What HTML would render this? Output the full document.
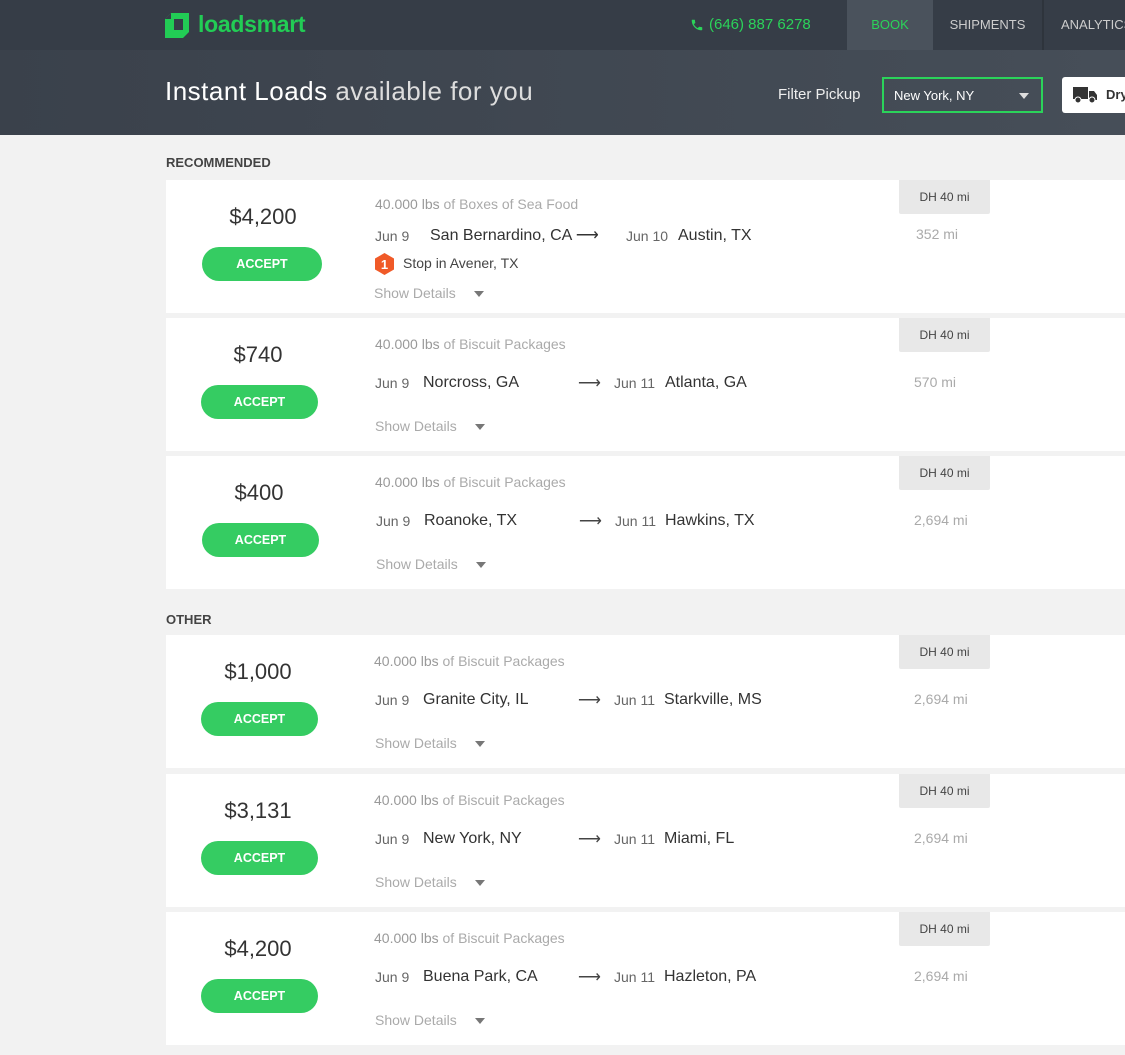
<!DOCTYPE html>
<html><head><meta charset="utf-8"><style>
*{margin:0;padding:0;box-sizing:border-box}
body{width:1125px;height:1055px;background:#f2f2f2;font-family:"Liberation Sans",sans-serif;position:relative;overflow:hidden;color:#333}
.a{position:absolute;white-space:nowrap}
.nav{left:0;top:0;width:1125px;height:50px;background:#363d47}
.hero{left:0;top:50px;width:1125px;height:85px;background:linear-gradient(90deg,#3a414b,#464e58)}
.card{position:absolute;left:166px;width:960px;height:133px;background:#fff}
.price{position:absolute;font-size:22px;color:#333;text-align:center;width:140px}
.btn{position:absolute;height:34px;border-radius:17px;background:#35cc62;color:#fff;font-size:12.5px;font-weight:bold;text-align:center;line-height:34px}
.g{color:#aaa;font-size:14px}
.g b{font-weight:normal;color:#999}
.d{font-size:14px;color:#666}
.c{font-size:16px;color:#333}
.dh{position:absolute;left:733px;top:0;width:91px;height:34px;background:#e8e8e8;font-size:12px;color:#444;text-align:center;line-height:34px;border-radius:0 0 2px 2px}
.car{display:inline-block;width:0;height:0;border-left:5px solid transparent;border-right:5px solid transparent;border-top:6px solid #777;margin-left:18px;vertical-align:middle}
.lbl{font-size:13px;font-weight:bold;color:#444}
</style></head><body>
<div class="a nav"></div>
<div class="a hero"></div>
<svg class="a" style="left:164px;top:12px" width="26" height="27" viewBox="0 0 26 27"><path d="M7 1H25V20L19 26H1V7L7 1Z" fill="#22cc55"/><path d="M10 7H19V18H10Z" fill="#363d47"/><path d="M7 1V7H1Z" fill="#363d47"/></svg>
<div class="a" style="left:198px;top:11px;font-size:23px;font-weight:bold;color:#22cc55;letter-spacing:-0.3px">loadsmart</div>
<svg class="a" style="left:690px;top:18px" width="14" height="14" viewBox="0 0 24 24"><path d="M6.6 10.8c1.4 2.8 3.8 5.1 6.6 6.6l2.2-2.2c.3-.3.7-.4 1-.2 1.1.4 2.3.6 3.6.6.6 0 1 .4 1 1V20c0 .6-.4 1-1 1C10.6 21 3 13.4 3 4c0-.6.4-1 1-1h3.5c.6 0 1 .4 1 1 0 1.3.2 2.5.6 3.6.1.3 0 .7-.2 1L6.6 10.8z" fill="#2bd35a"/></svg>
<div class="a" style="left:709px;top:16px;font-size:15px;color:#2bd35a">(646) 887 6278</div>
<div class="a" style="left:847px;top:0;width:86px;height:50px;background:#4a525c;color:#2bd35a;font-size:13px;text-align:center;line-height:50px">BOOK</div>
<div class="a" style="left:933px;top:0;width:109px;height:50px;color:#ccc;font-size:13px;text-align:center;line-height:50px">SHIPMENTS</div>
<div class="a" style="left:1042px;top:0;width:2px;height:50px;background:#2e343c"></div>
<div class="a" style="left:1061px;top:17px;color:#ccc;font-size:13px">ANALYTICS</div>
<div class="a" style="left:165px;top:76px;font-size:26px;color:#fff;letter-spacing:0.5px">Instant Loads <span style="color:#ddd">available for you</span></div>
<div class="a" style="left:778px;top:86px;font-size:15px;color:#eee">Filter Pickup</div>
<div class="a" style="left:882px;top:77px;width:161px;height:36px;border:2px solid #2bd35a;color:#fff;font-size:13px;padding:9px 0 0 10px">New York, NY<span style="position:absolute;right:12px;top:14px;border-left:5px solid transparent;border-right:5px solid transparent;border-top:6px solid #ddd"></span></div>
<div class="a" style="left:1062px;top:77px;width:80px;height:36px;background:#fff;border-radius:3px;font-size:13px;font-weight:bold;padding:10px 0 0 44px;color:#333">Dry</div>
<svg class="a" style="left:1073px;top:86px" width="25" height="18" viewBox="0 0 25 18"><rect x="0" y="1" width="15" height="12" fill="#333"/><path d="M16 5H21L24 9V14H16Z" fill="#333"/><circle cx="5" cy="14" r="3" fill="#333" stroke="#fff"/><circle cx="19" cy="14" r="3" fill="#333" stroke="#fff"/></svg>

<div class="a lbl" style="left:166px;top:155px">RECOMMENDED</div>

<div class="card" style="top:180px">
<div class="price" style="left:27px;top:24px">$4,200</div>
<div class="btn" style="left:36px;top:67px;width:120px">ACCEPT</div>
<div class="a g" style="left:209px;top:16px"><b>40.000 lbs</b> of Boxes of Sea Food</div>
<div class="a d" style="left:209px;top:48px">Jun 9</div>
<div class="a c" style="left:264px;top:45px">San Bernardino, CA &#10230;</div>
<div class="a d" style="left:460px;top:48px">Jun 10</div>
<div class="a c" style="left:512px;top:47px">Austin, TX</div>
<svg class="a" style="left:208px;top:73px" width="21" height="22" viewBox="0 0 21 22"><path d="M10.5 0L20 5.5V16.5L10.5 22L1 16.5V5.5Z" fill="#f05a28"/><text x="10.5" y="16" font-size="13" font-weight="bold" fill="#fff" text-anchor="middle" font-family="Liberation Sans">1</text></svg>
<div class="a" style="left:237px;top:75px;font-size:14px;color:#444">Stop in Avener, TX</div>
<div class="a g" style="left:208px;top:105px">Show Details<span class="car"></span></div>
<div class="dh">DH 40 mi</div>
<div class="a g" style="left:750px;top:46px">352 mi</div>
</div>

<div class="card" style="top:318px">
<div class="price" style="left:22px;top:24px">$740</div>
<div class="btn" style="left:35px;top:67px;width:117px">ACCEPT</div>
<div class="a g" style="left:209px;top:18px"><b>40.000 lbs</b> of Biscuit Packages</div>
<div class="a d" style="left:209px;top:57px">Jun 9</div>
<div class="a c" style="left:257px;top:56px">Norcross, GA</div>
<div class="a c" style="left:412px;top:55px;color:#444">&#10230;</div>
<div class="a d" style="left:448px;top:57px">Jun 11</div>
<div class="a c" style="left:499px;top:56px">Atlanta, GA</div>
<div class="a g" style="left:209px;top:100px">Show Details<span class="car"></span></div>
<div class="dh">DH 40 mi</div>
<div class="a g" style="left:748px;top:56px">570 mi</div>
</div>

<div class="card" style="top:456px">
<div class="price" style="left:23px;top:24px">$400</div>
<div class="btn" style="left:36px;top:67px;width:117px">ACCEPT</div>
<div class="a g" style="left:209px;top:18px"><b>40.000 lbs</b> of Biscuit Packages</div>
<div class="a d" style="left:210px;top:57px">Jun 9</div>
<div class="a c" style="left:258px;top:56px">Roanoke, TX</div>
<div class="a c" style="left:413px;top:55px;color:#444">&#10230;</div>
<div class="a d" style="left:449px;top:57px">Jun 11</div>
<div class="a c" style="left:499px;top:56px">Hawkins, TX</div>
<div class="a g" style="left:210px;top:100px">Show Details<span class="car"></span></div>
<div class="dh">DH 40 mi</div>
<div class="a g" style="left:748px;top:56px">2,694 mi</div>
</div>

<div class="a lbl" style="left:166px;top:612px">OTHER</div>

<div class="card" style="top:635px">
<div class="price" style="left:22px;top:24px">$1,000</div>
<div class="btn" style="left:35px;top:67px;width:117px">ACCEPT</div>
<div class="a g" style="left:208px;top:18px"><b>40.000 lbs</b> of Biscuit Packages</div>
<div class="a d" style="left:209px;top:57px">Jun 9</div>
<div class="a c" style="left:257px;top:56px">Granite City, IL</div>
<div class="a c" style="left:412px;top:55px;color:#444">&#10230;</div>
<div class="a d" style="left:448px;top:57px">Jun 11</div>
<div class="a c" style="left:498px;top:56px">Starkville, MS</div>
<div class="a g" style="left:209px;top:100px">Show Details<span class="car"></span></div>
<div class="dh">DH 40 mi</div>
<div class="a g" style="left:748px;top:56px">2,694 mi</div>
</div>

<div class="card" style="top:774px">
<div class="price" style="left:22px;top:24px">$3,131</div>
<div class="btn" style="left:35px;top:67px;width:117px">ACCEPT</div>
<div class="a g" style="left:208px;top:18px"><b>40.000 lbs</b> of Biscuit Packages</div>
<div class="a d" style="left:209px;top:57px">Jun 9</div>
<div class="a c" style="left:257px;top:56px">New York, NY</div>
<div class="a c" style="left:412px;top:55px;color:#444">&#10230;</div>
<div class="a d" style="left:448px;top:57px">Jun 11</div>
<div class="a c" style="left:498px;top:56px">Miami, FL</div>
<div class="a g" style="left:209px;top:100px">Show Details<span class="car"></span></div>
<div class="dh">DH 40 mi</div>
<div class="a g" style="left:748px;top:56px">2,694 mi</div>
</div>

<div class="card" style="top:912px">
<div class="price" style="left:22px;top:24px">$4,200</div>
<div class="btn" style="left:35px;top:67px;width:117px">ACCEPT</div>
<div class="a g" style="left:208px;top:18px"><b>40.000 lbs</b> of Biscuit Packages</div>
<div class="a d" style="left:209px;top:57px">Jun 9</div>
<div class="a c" style="left:257px;top:56px">Buena Park, CA</div>
<div class="a c" style="left:412px;top:55px;color:#444">&#10230;</div>
<div class="a d" style="left:448px;top:57px">Jun 11</div>
<div class="a c" style="left:498px;top:56px">Hazleton, PA</div>
<div class="a g" style="left:209px;top:100px">Show Details<span class="car"></span></div>
<div class="dh">DH 40 mi</div>
<div class="a g" style="left:748px;top:56px">2,694 mi</div>
</div>
</body></html>
